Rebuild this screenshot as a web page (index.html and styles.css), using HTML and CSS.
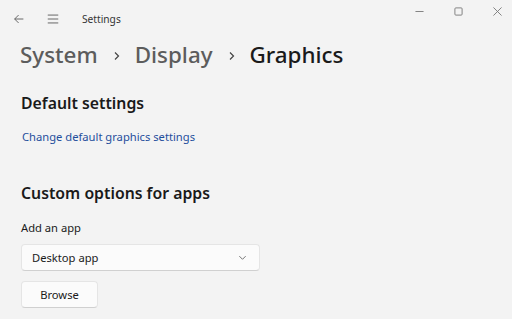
FILE: index.html
```html
<!DOCTYPE html>
<html lang="en">
<head>
    <meta charset="UTF-8">
    <title>Settings</title>
    <link rel="stylesheet" href="styles.css">
</head>
<body>
    <!-- Title bar -->
    <div class="titlebar">
        <div class="title-left">
            <svg class="tb-icon" viewBox="0 0 16 16"><path d="M13 8H3M7.5 3.5L3 8l4.5 4.5" fill="none" stroke="#555" stroke-width="1"/></svg>
            <svg class="tb-icon menu" viewBox="0 0 16 16"><path d="M2 3.5h12M2 8h12M2 12.5h12" fill="none" stroke="#555" stroke-width="1"/></svg>
            <span class="app-title">Settings</span>
        </div>
        <div class="window-controls">
            <svg class="wc" viewBox="0 0 10 10"><path d="M0.5 5h9" stroke="#777" stroke-width="1"/></svg>
            <svg class="wc" viewBox="0 0 10 10"><rect x="1" y="1" width="8" height="8" rx="1" fill="none" stroke="#777" stroke-width="1"/></svg>
            <svg class="wc" viewBox="0 0 10 10"><path d="M0.5 0.5l9 9M9.5 0.5l-9 9" stroke="#777" stroke-width="1"/></svg>
        </div>
    </div>

    <div class="content">
        <h1 class="breadcrumb">
            <span class="crumb">System</span>
            <svg class="sep" viewBox="0 0 10 10"><path d="M3 1.5L6.5 5 3 8.5" fill="none" stroke="#444" stroke-width="1.2"/></svg>
            <span class="crumb">Display</span>
            <svg class="sep" viewBox="0 0 10 10"><path d="M3 1.5L6.5 5 3 8.5" fill="none" stroke="#444" stroke-width="1.2"/></svg>
            <span class="crumb current">Graphics</span>
        </h1>

        <h2 class="section-title">Default settings</h2>
        <a class="link" href="#">Change default graphics settings</a>

        <h2 class="section-title second">Custom options for apps</h2>
        <div class="label">Add an app</div>
        <div class="select">
            <span>Desktop app</span>
            <svg class="chev" viewBox="0 0 10 10"><path d="M1.5 3.5L5 7l3.5-3.5" fill="none" stroke="#666" stroke-width="1"/></svg>
        </div>
        <button class="btn">Browse</button>
    </div>
</body>
</html>
```

FILE: styles.css
```css
/* General Styles */
body {
    margin: 0;
    padding: 0;
    background: #f3f3f3;
    font-family: 'Noto Sans', 'Open Sans', sans-serif;
    color: #1a1a1a;
    width: 512px;
    height: 319px;
    overflow: hidden;
}

.titlebar {
    display: flex;
    justify-content: space-between;
    align-items: flex-start;
    height: 36px;
}

.title-left {
    display: flex;
    align-items: center;
    height: 38px;
    padding-left: 12px;
}

.tb-icon {
    width: 14px;
    height: 14px;
}

.tb-icon.menu {
    margin-left: 20px;
}

.app-title {
    margin-left: 22px;
    font-size: 10.2px;
    color: #333;
}

.window-controls {
    display: flex;
}

.wc {
    width: 9px;
    height: 9px;
    padding: 7px 10px 7px 20px;
}

.content {
    padding: 0 21px;
}

.breadcrumb {
    display: flex;
    align-items: center;
    margin: 3px 0 0 -1px;
    font-size: 22.4px;
    font-weight: 500;
    line-height: 32px;
    height: 32px;
}

.crumb {
    color: #5c5c5c;
}

.crumb.current {
    color: #1a1a1a;
}

.sep {
    width: 10px;
    height: 10px;
    margin: 2px 13px 0 14px;
}

.section-title {
    margin: 20px 0 0;
    font-size: 15.8px;
    font-weight: 600;
    line-height: 24px;
}

.section-title.second {
    margin-top: 36px;
}

.link {
    display: block;
    margin-top: 14px;
    margin-left: 1px;
    font-size: 11.2px;
    color: #1f4e9c;
    text-decoration: none;
    line-height: 16px;
}

.label {
    margin-top: 15px;
    font-size: 11.2px;
    line-height: 16px;
    color: #1a1a1a;
}

.select {
    display: flex;
    justify-content: space-between;
    align-items: center;
    box-sizing: border-box;
    width: 239px;
    height: 27px;
    margin-top: 8px;
    padding: 0 12px 0 10px;
    background: #fbfbfb;
    border: 1px solid #e5e5e5;
    border-bottom-color: #d0d0d0;
    border-radius: 4px;
    font-size: 11.2px;
}

.chev {
    width: 9px;
    height: 9px;
}

.btn {
    display: block;
    box-sizing: border-box;
    width: 77px;
    height: 27px;
    margin-top: 10px;
    background: #fbfbfb;
    border: 1px solid #e5e5e5;
    border-bottom-color: #d0d0d0;
    border-radius: 4px;
    font-family: inherit;
    font-size: 11.2px;
    color: #1a1a1a;
}
```
